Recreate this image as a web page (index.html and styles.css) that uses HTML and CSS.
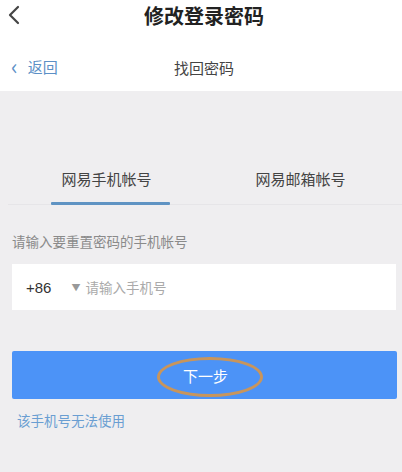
FILE: index.html
```html
<!DOCTYPE html>
<html lang="zh">
<head>
<meta charset="utf-8">
<link rel="stylesheet" href="styles.css">
</head>
<body>
<div class="top">
  <div class="titlebar">
    <svg class="back-icon" width="14" height="20" viewBox="0 0 14 20"><path d="M11 2 L3 10 L11 18" fill="none" stroke="#444" stroke-width="2.2" stroke-linecap="round" stroke-linejoin="round"/></svg>
    <div class="title">修改登录密码</div>
  </div>
  <div class="subnav">
    <div class="back-link"><span class="chev">‹</span>返回</div>
    <div class="subtitle">找回密码</div>
  </div>
</div>
<div class="main">
  <div class="tabs">
    <div class="tab active"><span>网易手机帐号</span></div>
    <div class="tab second"><span>网易邮箱帐号</span></div>
  </div>
  <div class="label">请输入要重置密码的手机帐号</div>
  <div class="input">
    <span class="code">+86</span>
    <span class="arrow">▼</span>
    <span class="placeholder">请输入手机号</span>
  </div>
  <div class="btn"><span class="btn-text">下一步</span></div>
  <div class="link">该手机号无法使用</div>
</div>
</body>
</html>
```
FILE: styles.css
```css
html, body {
  margin: 0;
  padding: 0;
}
body {
  width: 402px;
  height: 472px;
  overflow: hidden;
  background: #efeef0;
  font-family: "Noto Sans CJK SC", "Noto Sans", sans-serif;
}
.top {
  background: #fff;
  height: 91px;
}
.titlebar {
  height: 34px;
  display: flex;
  align-items: center;
  justify-content: center;
  position: relative;
}
.back-icon {
  position: absolute;
  left: 7px;
  top: 5px;
}
.title {
  font-size: 20px;
  font-weight: bold;
  color: #222;
  margin-top: -4px;
  padding-left: 6px;
}
.subnav {
  height: 57px;
  display: flex;
  align-items: center;
  position: relative;
}
.back-link {
  position: absolute;
  left: 11px;
  top: 23px;
  font-size: 15px;
  color: #5b8fc6;
  display: flex;
  align-items: center;
  line-height: 20px;
}
.chev {
  font-size: 22px;
  margin-right: 10px;
  line-height: 20px;
  position: relative;
  top: -2px;
}
.subtitle {
  width: 100%;
  text-align: center;
  font-size: 15px;
  color: #444;
  margin-top: 9px;
  padding-left: 6px;
}
.main {
  padding-top: 66px;
}
.tabs {
  display: grid;
  grid-template-columns: 1fr 1fr;
  border-bottom: 1px solid #e6e5e8;
  margin-left: 8px;
}
.tab {
  display: flex;
  justify-content: center;
  font-size: 15px;
  color: #444;
  height: 47px;
  position: relative;
}
.tab span {
  padding-top: 11px;
}
.tab.second {
  padding-right: 6px;
}
.tab.active::after {
  content: "";
  position: absolute;
  left: calc(50% - 56px);
  bottom: -1px;
  width: 119px;
  height: 3px;
  background: #5f93c3;
  border-radius: 1px;
}
.label {
  margin-top: 26px;
  margin-left: 12px;
  font-size: 13.5px;
  color: #8a8a8a;
  line-height: 20px;
}
.input {
  margin: 13px 6px 0 12px;
  height: 46px;
  background: #fff;
  display: flex;
  align-items: center;
  padding-left: 14px;
}
.code {
  font-family: "Liberation Sans", Arial, sans-serif;
  font-size: 15px;
  color: #333;
}
.arrow {
  font-size: 9px;
  color: #999;
  margin-left: 20px;
}
.placeholder {
  margin-left: 5px;
  font-size: 13.5px;
  color: #aaa;
}
.btn {
  margin: 41px 5px 0 12px;
  height: 48px;
  background: #4c93f7;
  border-radius: 2px;
  display: flex;
  align-items: center;
  justify-content: center;
  position: relative;
}
.btn-text {
  color: #fff;
  font-size: 15px;
  margin-left: 2px;
}
.btn-text::before {
  content: "";
  position: absolute;
  left: 145px;
  top: 6px;
  width: 100px;
  height: 34px;
  border: 3px solid #c8955c;
  border-radius: 50%;
}
.link {
  margin-top: 11px;
  margin-left: 17px;
  font-size: 13.5px;
  color: #6a9ed2;
  line-height: 20px;
}
```
